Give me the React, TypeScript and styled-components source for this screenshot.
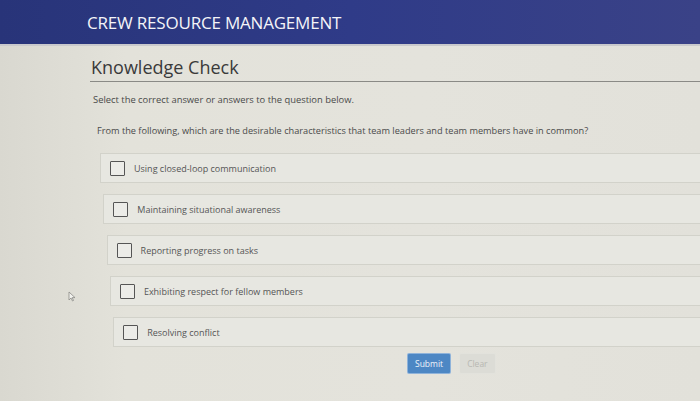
import { FC } from "react";
import styled, { createGlobalStyle } from "styled-components";

const GlobalStyle = createGlobalStyle`
  html, body {
    margin: 0;
    padding: 0;
    background: #e1e0d8;
  }
  body {
    font-family: "Open Sans", "Noto Sans", sans-serif;
  }
`;

const Page = styled.div`
  position: relative;
  width: 700px;
  height: 401px;
  overflow: hidden;
  background: linear-gradient(90deg, #d9d8d0 0%, #e3e2da 18%, #e4e3dc 60%, #e2e1da 100%);
`;

const Header = styled.header`
  height: 46px;
  display: flex;
  align-items: center;
  padding: 0 0 0 87px;
  box-sizing: border-box;
  background: linear-gradient(90deg, #283479 0%, #2f3b88 50%, #3a4287 100%);
  border-bottom: 2px solid #c9c9cc;
`;

const Title = styled.h1`
  margin: 0;
  font-size: 17px;
  font-weight: 400;
  color: #f4f4f8;
  letter-spacing: -0.2px;
`;

const Content = styled.main`
  padding: 9px 0 0 90px;
`;

const SectionTitle = styled.h2`
  margin: 0;
  padding: 0 0 2px 1px;
  font-size: 18px;
  font-weight: 400;
  color: #3a3a3a;
  border-bottom: 1px solid #8a8a86;
`;

const Instruction = styled.p`
  margin: 11px 0 0 3px;
  font-size: 9.4px;
  color: #4a4a4a;
`;

const Question = styled.p`
  margin: 18px 0 0 7px;
  font-size: 9.2px;
  color: #4a4a4a;
`;

const OptionList = styled.ul`
  list-style: none;
  margin: 16px 0 0 0;
  padding: 0;
  display: flex;
  flex-direction: column;
  gap: 11px;
`;

const OptionRow = styled.li<{ $shift: number }>`
  margin-left: ${(p) => p.$shift}px;
  height: 28px;
  display: flex;
  align-items: center;
  gap: 9px;
  padding-left: 9px;
  background: #e7e7e1;
  border: 1px solid #d2d2ca;
  border-right: none;
`;

const Box = styled.span`
  width: 13px;
  height: 13px;
  border: 1.5px solid #555;
  border-radius: 1px;
  background: #ecece8;
  flex-shrink: 0;
`;

const OptionText = styled.span`
  font-size: 9px;
  color: #555;
`;

const Actions = styled.div`
  display: flex;
  gap: 10px;
  margin: 7px 0 0 318px;
`;

const Button = styled.button<{ $primary?: boolean }>`
  font-family: inherit;
  font-size: 8.5px;
  height: 19px;
  padding: 0 7px;
  border: none;
  border-radius: 1px;
  background: ${(p) => (p.$primary ? "#4d87c4" : "#dcdcd6")};
  color: ${(p) => (p.$primary ? "#eef3fa" : "#b8b8b2")};
  box-shadow: ${(p) => (p.$primary ? "0 0 0 1px #8fb3da" : "0 0 0 1px #e2e2dc")};
`;

const Cursor = styled.svg`
  position: absolute;
  left: 68px;
  top: 291px;
`;

const options = [
  "Using closed-loop communication",
  "Maintaining situational awareness",
  "Reporting progress on tasks",
  "Exhibiting respect for fellow members",
  "Resolving conflict",
];

const App: FC = () => (
  <Page>
    <GlobalStyle />
    <Header>
      <Title>CREW RESOURCE MANAGEMENT</Title>
    </Header>
    <Content>
      <SectionTitle>Knowledge Check</SectionTitle>
      <Instruction>Select the correct answer or answers to the question below.</Instruction>
      <Question>
        From the following, which are the desirable characteristics that team leaders and team members have in common?
      </Question>
      <OptionList>
        {options.map((text, i) => (
          <OptionRow key={text} $shift={10 + i * 3.3}>
            <Box />
            <OptionText>{text}</OptionText>
          </OptionRow>
        ))}
      </OptionList>
      <Actions>
        <Button $primary>Submit</Button>
        <Button>Clear</Button>
      </Actions>
    </Content>
    <Cursor width="8" height="11" viewBox="0 0 8 11">
      <path d="M1 1 L1 9 L3 7 L4.5 10 L5.5 9.5 L4.2 6.6 L7 6.6 Z" fill="#f2f2ee" stroke="#8a8a86" strokeWidth="0.8" />
    </Cursor>
  </Page>
);

export default App;
